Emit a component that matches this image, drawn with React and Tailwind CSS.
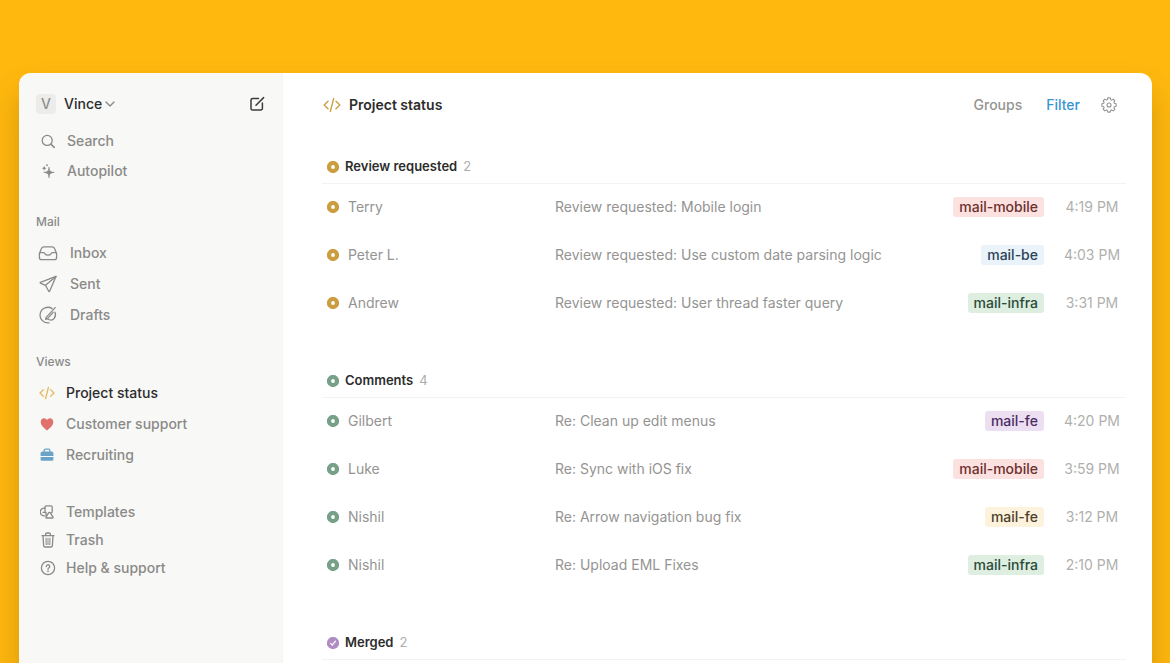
import { ChevronDown } from 'lucide-react'

const stroke = {
  fill: 'none',
  stroke: 'currentColor',
  strokeWidth: 1.3,
  strokeLinecap: 'round',
  strokeLinejoin: 'round',
}

const ComposeIcon = () => (
  <svg className="w-4 h-4" viewBox="0 0 16 16" {...stroke} strokeWidth="1.5">
    <path d="M9.5 2.6H3.6A1.6 1.6 0 0 0 2 4.2V12.4A1.6 1.6 0 0 0 3.6 14H11.8A1.6 1.6 0 0 0 13.4 12.4V7" />
    <path d="M7 9.2L14.6 1.6" />
  </svg>
)

const SearchIcon = () => (
  <svg className="w-4 h-4" viewBox="0 0 16 16" {...stroke}>
    <circle cx="7.2" cy="7.4" r="5" />
    <path d="M11 11.2L14.2 14.4" strokeWidth="1.6" />
  </svg>
)

const SparkIcon = () => (
  <svg className="w-4 h-4" viewBox="0 0 16 16" fill="currentColor">
    <path d="M9 4.2C9.3 8 10.1 8.9 14.2 9.4C10.1 9.9 9.3 10.8 9 14.8C8.7 10.8 7.9 9.9 3.8 9.4C7.9 8.9 8.7 8 9 4.2Z" stroke="currentColor" strokeWidth="0.7" />
    <path d="M4.2 3L5 4.4L6.4 5.2L5 6L4.2 7.4L3.4 6L2 5.2L3.4 4.4Z" />
    <circle cx="7" cy="2.2" r="0.9" />
  </svg>
)

const InboxIcon = () => (
  <svg className="w-5 h-5" viewBox="0 0 20 20" {...stroke}>
    <path d="M1.4 10.4L3.7 5.1A2.2 2.2 0 0 1 5.7 3.8H14.3A2.2 2.2 0 0 1 16.3 5.1L18.6 10.4V14.4A2.2 2.2 0 0 1 16.4 16.6H3.6A2.2 2.2 0 0 1 1.4 14.4Z" />
    <path d="M1.6 9.6H5.7C6.5 9.6 6.7 10.1 7.1 10.9C7.6 11.9 8.4 12.2 10 12.2C11.6 12.2 12.4 11.9 12.9 10.9C13.3 10.1 13.5 9.6 14.3 9.6H18.4" />
  </svg>
)

const SentIcon = () => (
  <svg className="w-5 h-5" viewBox="0 0 20 20" {...stroke}>
    <path d="M18 2.4L2.4 8.3C2 8.5 2 9 2.4 9.2L7.5 11.3L10.7 17.3C10.9 17.7 11.4 17.7 11.6 17.3Z" />
    <path d="M7.5 11.3L18 2.4" />
  </svg>
)

const DraftsIcon = () => (
  <svg className="w-5 h-5" viewBox="0 0 20 20" {...stroke}>
    <path d="M14.2 3.6A7.8 7.8 0 1 0 11 17.8" />
    <path d="M17.2 2.6L8.2 12.4L7.6 14.3L9.5 13.6L15.2 7.4" />
    <path d="M17 7.2A6.4 6.4 0 0 1 16.2 13.4C14.4 15.9 11.4 15.2 9.4 13.7" />
  </svg>
)

const CodeIcon = ({ className }) => (
  <svg className={className} viewBox="0 0 18 16" {...stroke} strokeWidth="1.5">
    <path d="M5 4.2L1.2 8L5 11.8M13 4.2L16.8 8L13 11.8M10.6 1.6L7.4 14.4" />
  </svg>
)

const HeartIcon = () => (
  <svg className="w-4 h-4 text-[#e0716c]" viewBox="0 0 16 16" fill="currentColor">
    <path d="M8 14.4C4 11.6 1.7 9 1.7 6C1.7 3.7 3.2 2.3 5 2.3C6.4 2.3 7.4 3 8 4.2C8.6 3 9.6 2.3 11 2.3C12.8 2.3 14.3 3.7 14.3 6C14.3 9 12 11.6 8 14.4Z" />
  </svg>
)

const BriefcaseIcon = () => (
  <svg className="w-4 h-4 text-[#6ba3c8]" viewBox="0 0 16 16" fill="currentColor">
    <path d="M5.2 5V3.4A1.2 1.2 0 0 1 6.4 2.2H9.6A1.2 1.2 0 0 1 10.8 3.4V5" fill="none" stroke="currentColor" strokeWidth="1.3" />
    <path d="M3.4 4.4H12.6A1.8 1.8 0 0 1 14.4 6.2V9H1.6V6.2A1.8 1.8 0 0 1 3.4 4.4Z" />
    <path d="M1.6 9.9H14.4V12.4A1.4 1.4 0 0 1 13 13.8H3A1.4 1.4 0 0 1 1.6 12.4Z" />
  </svg>
)

const TemplatesIcon = () => (
  <svg className="w-4 h-4" viewBox="0 0 16 16" {...stroke}>
    <path d="M5 11.8A3.9 3.9 0 1 1 5 4.2" />
    <path d="M5 8.6V3A1.2 1.2 0 0 1 6.2 1.8H11A1.2 1.2 0 0 1 12.2 3V7.6A1.2 1.2 0 0 1 11.6 8.7" />
    <path d="M8.6 8.8L6 13.2C5.8 13.7 6 14 6.4 14H12.6C13 14 13.2 13.7 13 13.2L10.4 8.8C10 8.2 9 8.2 8.6 8.8ZM3 8.4H6V10.8" />
  </svg>
)

const TrashIcon = () => (
  <svg className="w-4 h-4" viewBox="0 0 16 16" {...stroke}>
    <path d="M2 3.7H14M5.6 3.5V2.2A1.2 1.2 0 0 1 6.8 1H9.2A1.2 1.2 0 0 1 10.4 2.2V3.5" />
    <path d="M3 3.9L3.6 13.4A1.7 1.7 0 0 0 5.3 15H10.7A1.7 1.7 0 0 0 12.4 13.4L13 3.9" />
    <path d="M6 6.2L6.2 12.6M8 6.2V12.6M10 6.2L9.8 12.6" strokeWidth="1" />
  </svg>
)

const HelpIcon = () => (
  <svg className="w-4 h-4" viewBox="0 0 16 16" {...stroke}>
    <circle cx="8" cy="8" r="6.6" />
    <path d="M6.3 6.5A1.7 1.7 0 1 1 8.7 8C8.2 8.3 8 8.6 8 9.2" />
    <circle cx="8" cy="11.2" r="0.3" />
  </svg>
)

const GearIcon = () => (
  <svg className="w-4 h-4" viewBox="0 0 16 16" {...stroke} strokeWidth="1.1">
    <path d="M6.8 0.9H9.2L9.7 2.7L10.6 3.1L12.2 2.1L13.9 3.8L12.9 5.4L13.3 6.3L15.1 6.8V9.2L13.3 9.7L12.9 10.6L13.9 12.2L12.2 13.9L10.6 12.9L9.7 13.3L9.2 15.1H6.8L6.3 13.3L5.4 12.9L3.8 13.9L2.1 12.2L3.1 10.6L2.7 9.7L0.9 9.2V6.8L2.7 6.3L3.1 5.4L2.1 3.8L3.8 2.1L5.4 3.1L6.3 2.7Z" />
    <circle cx="8" cy="8" r="2" />
  </svg>
)

const DotIcon = ({ className }) => (
  <svg className={className} viewBox="0 0 12 12">
    <circle cx="6" cy="6" r="4" fill="none" stroke="currentColor" strokeWidth="4.2" />
  </svg>
)

const CheckIcon = ({ className }) => (
  <svg className={className} viewBox="0 0 12 12">
    <circle cx="6" cy="6" r="6.1" fill="currentColor" />
    <path d="M3.6 6.3L5.3 8L8.5 4.1" fill="none" stroke="#fff" strokeWidth="1.2" strokeLinecap="round" />
  </svg>
)

const mailItems = [
  { icon: InboxIcon, label: 'Inbox' },
  { icon: SentIcon, label: 'Sent' },
  { icon: DraftsIcon, label: 'Drafts' },
]

const footerItems = [
  { icon: TemplatesIcon, label: 'Templates' },
  { icon: TrashIcon, label: 'Trash' },
  { icon: HelpIcon, label: 'Help & support' },
]

const tagColors = {
  red: 'bg-[#fbe1df] text-[#6b2f2c]',
  blue: 'bg-[#e9f3f9] text-[#2b4257]',
  green: 'bg-[#deeee0] text-[#2b4b38]',
  purple: 'bg-[#ecdff2] text-[#4b2d63]',
  yellow: 'bg-[#fdf3dc] text-[#4d3f2d]',
}

const groups = [
  {
    title: 'Review requested',
    count: 2,
    icon: DotIcon,
    color: 'text-[#cb9d3f]',
    rows: [
      { from: 'Terry', subject: 'Review requested: Mobile login', tag: 'mail-mobile', color: 'red', time: '4:19 PM' },
      { from: 'Peter L.', subject: 'Review requested: Use custom date parsing logic', tag: 'mail-be', color: 'blue', time: '4:03 PM' },
      { from: 'Andrew', subject: 'Review requested: User thread faster query', tag: 'mail-infra', color: 'green', time: '3:31 PM' },
    ],
  },
  {
    title: 'Comments',
    count: 4,
    icon: DotIcon,
    color: 'text-[#76a088]',
    rows: [
      { from: 'Gilbert', subject: 'Re: Clean up edit menus', tag: 'mail-fe', color: 'purple', time: '4:20 PM' },
      { from: 'Luke', subject: 'Re: Sync with iOS fix', tag: 'mail-mobile', color: 'red', time: '3:59 PM' },
      { from: 'Nishil', subject: 'Re: Arrow navigation bug fix', tag: 'mail-fe', color: 'yellow', time: '3:12 PM' },
      { from: 'Nishil', subject: 'Re: Upload EML Fixes', tag: 'mail-infra', color: 'green', time: '2:10 PM' },
    ],
  },
  { title: 'Merged', count: 2, icon: CheckIcon, color: 'text-[#b08cc4]', rows: [] },
]

function Sidebar() {
  return (
    <aside className="w-[264px] shrink-0 bg-[#f8f8f7] border-r border-[#f4f4f3] px-[17px] pt-[15px] text-sm font-medium text-[#8a8a88]">
      <div className="flex h-8 items-center justify-between">
        <button className="flex items-center text-[#2c2c2b]">
          <span className="flex w-5 h-5 mr-2 items-center justify-center rounded bg-[#ececeb] text-[#8f8f8d]">V</span>
          Vince
          <ChevronDown className="w-4 h-4 text-[#8a8a88]" />
        </button>
        <button aria-label="Compose" className="text-[#3c3c3b]">
          <ComposeIcon />
        </button>
      </div>

      <nav className="mt-[6px]">
        <a href="#search" className="flex h-[30px] items-center gap-[7px]">
          <span className="flex w-6 justify-center"><SearchIcon /></span>
          Search
        </a>
        <a href="#autopilot" className="flex h-[30px] items-center gap-[7px]">
          <span className="flex w-6 justify-center"><SparkIcon /></span>
          Autopilot
        </a>
      </nav>

      <h2 className="mt-[26px] mb-[5px] text-xs leading-5">Mail</h2>
      <nav>
        {mailItems.map(({ icon: Icon, label }) => (
          <a key={label} href={`#${label}`} className="flex h-[31px] items-center gap-[10px]">
            <span className="flex w-6 justify-center"><Icon /></span>
            {label}
          </a>
        ))}
      </nav>

      <h2 className="mt-[22px] mb-[5px] text-xs leading-5">Views</h2>
      <nav>
        <a href="#project-status" className="flex h-[31px] items-center gap-2 text-[#2c2c2b]">
          <span className="flex w-[22px] justify-center"><CodeIcon className="w-4 h-4 text-[#e3b75c]" /></span>
          Project status
        </a>
        <a href="#customer-support" className="flex h-[31px] items-center gap-2">
          <span className="flex w-[22px] justify-center"><HeartIcon /></span>
          Customer support
        </a>
        <a href="#recruiting" className="flex h-[31px] items-center gap-2">
          <span className="flex w-[22px] justify-center"><BriefcaseIcon /></span>
          Recruiting
        </a>
      </nav>

      <nav className="mt-[28px]">
        {footerItems.map(({ icon: Icon, label }) => (
          <a key={label} href={`#${label}`} className="flex h-7 items-center gap-[6px]">
            <span className="flex w-6 justify-center"><Icon /></span>
            {label}
          </a>
        ))}
      </nav>
    </aside>
  )
}

function Group({ title, count, icon: Icon, color, rows }) {
  return (
    <section>
      <h2 className="flex h-[34px] items-center border-b border-[#f3f3f2] pl-[5px] text-[13px] font-semibold text-[#2c2c2b]">
        <Icon className={`w-3 h-3 mr-[6px] ${color}`} />
        {title}
        <span className="ml-[6px] font-normal text-[#acacaa]">{count}</span>
      </h2>
      <ul>
        {rows.map((row) => (
          <li key={row.time} className="flex h-12 items-center pb-[2px] px-[5px]">
            <span className="flex w-[228px] shrink-0 items-center gap-[9px]">
              <Icon className={`w-3 h-3 ${color}`} />
              {row.from}
            </span>
            <span className="flex-1 truncate">{row.subject}</span>
            <span className={`rounded-[3px] px-[6px] leading-5 font-medium ${tagColors[row.color]}`}>{row.tag}</span>
            <time className="w-[58px] ml-[19px] whitespace-nowrap text-center text-[#b0b0ae]">{row.time}</time>
          </li>
        ))}
      </ul>
    </section>
  )
}

export default function App() {
  return (
    <div className="h-screen overflow-hidden bg-[#ffb80e] pt-[73px] pl-[19px] pr-[18px] font-['Inter',sans-serif]">
      <div className="flex h-screen overflow-hidden rounded-[12px] bg-white shadow-[0_20px_30px_rgba(120,80,0,0.3)]">
        <Sidebar />
        <main className="flex-1 min-w-0 pl-[39px] pr-[26px] text-sm text-[#949492]">
          <header className="flex h-16 items-center pl-px pr-[9px]">
            <CodeIcon className="w-[18px] h-4 text-[#cfa04a]" />
            <h1 className="ml-2 flex-1 font-semibold text-[#2c2c2b]">Project status</h1>
            <button className="font-medium">Groups</button>
            <button className="ml-6 font-medium text-[#3896d3]">Filter</button>
            <button aria-label="Settings" className="ml-[21px]">
              <GearIcon />
            </button>
          </header>
          <div className="flex flex-col gap-9 pt-[13px]">
            {groups.map((group) => (
              <Group key={group.title} {...group} />
            ))}
          </div>
        </main>
      </div>
    </div>
  )
}
